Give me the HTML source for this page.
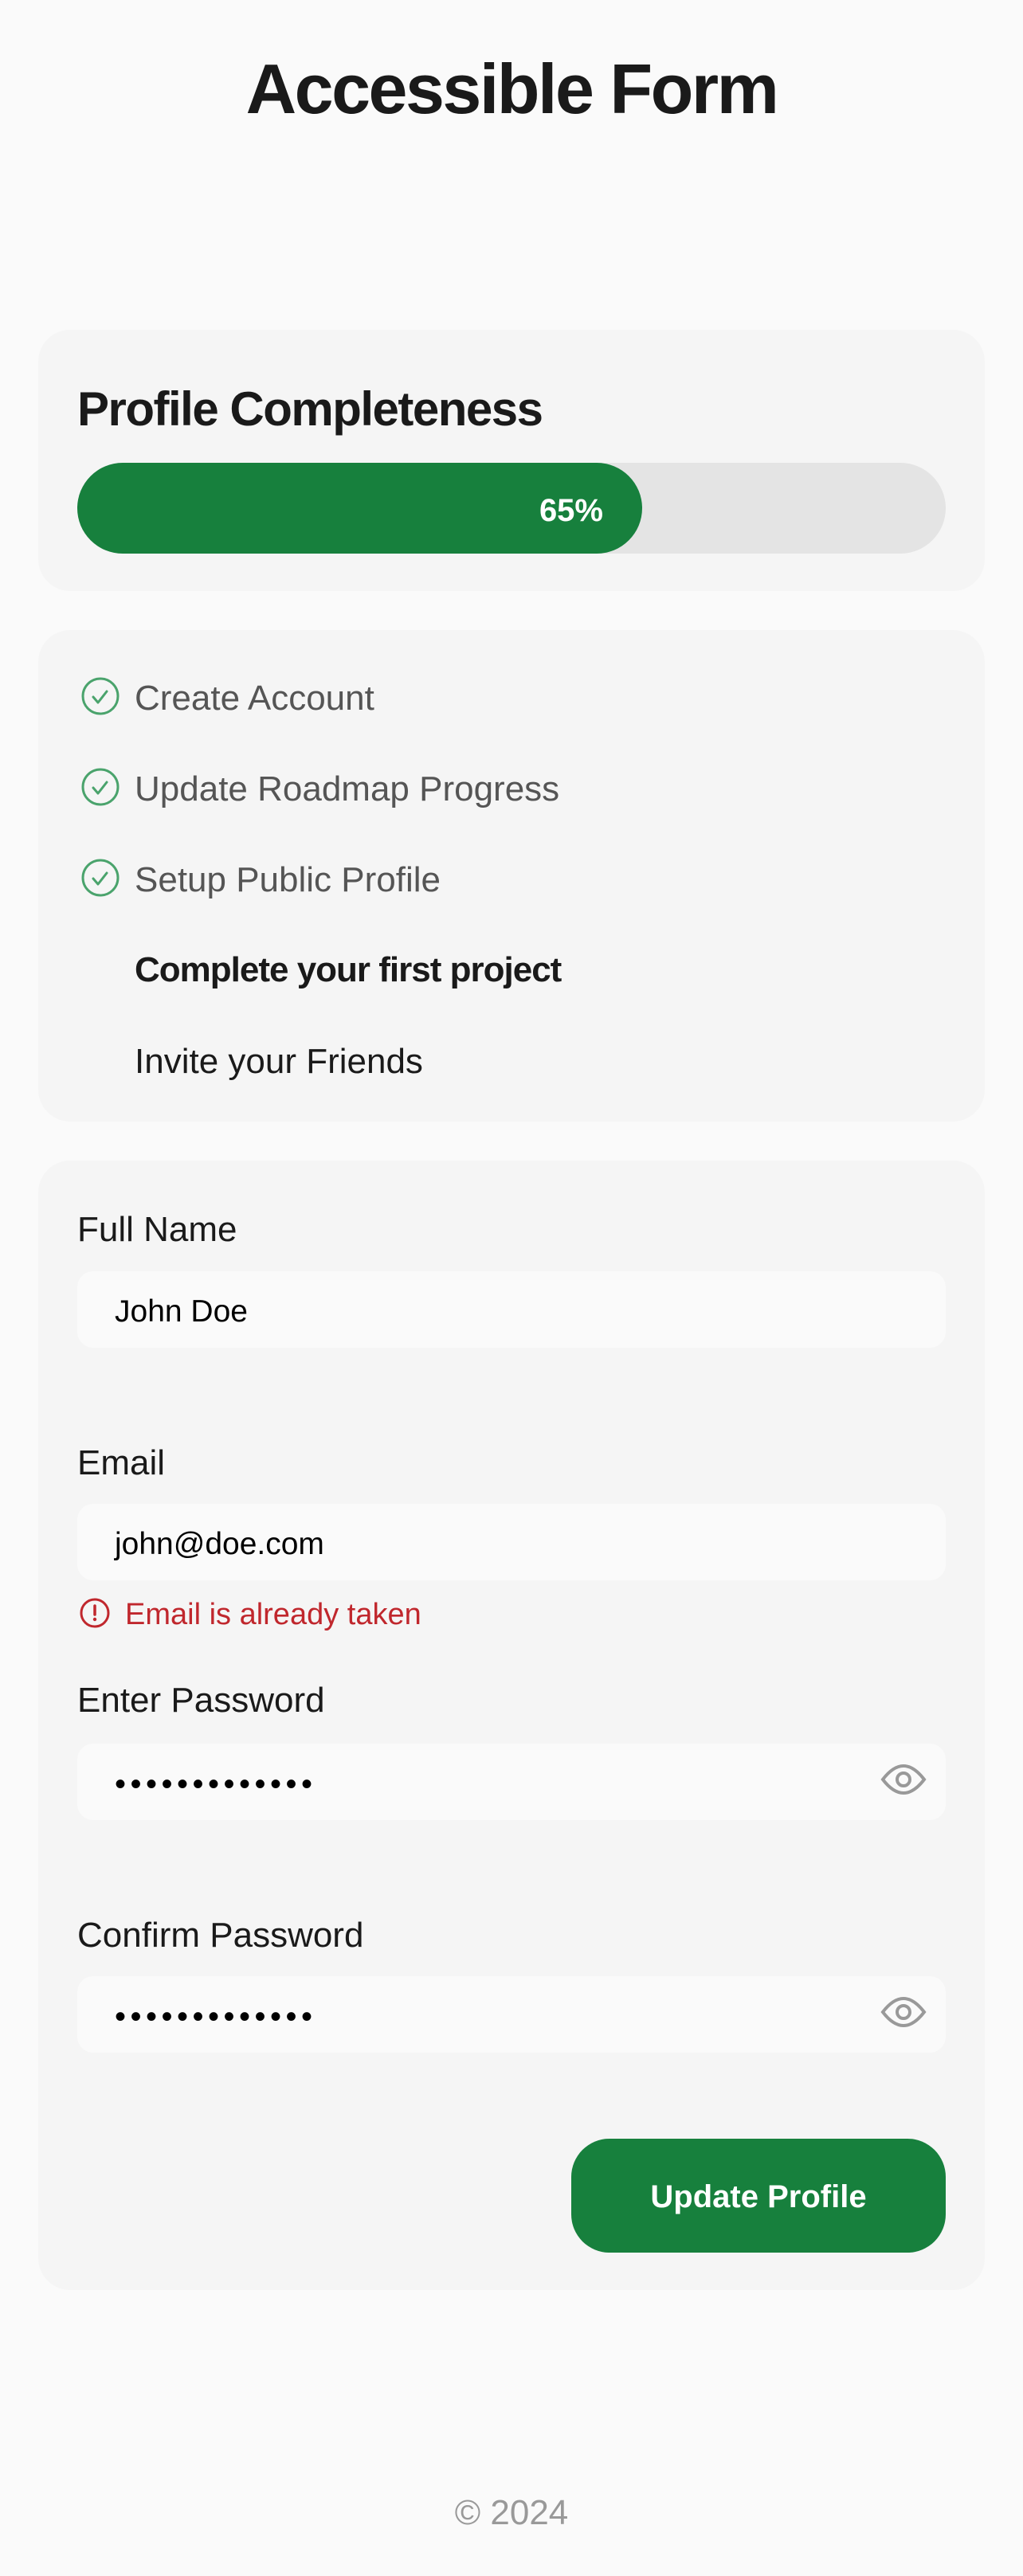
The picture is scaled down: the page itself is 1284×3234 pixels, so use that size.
<!DOCTYPE html>
<html><head><meta charset="utf-8"><style>
*{margin:0;padding:0;box-sizing:border-box}
html,body{width:1284px;height:3234px;background:#fafafa;overflow:hidden}
body{position:relative;font-family:"Liberation Sans",sans-serif;color:#1a1a1a}
.a{position:absolute}
.card{position:absolute;left:48px;width:1188px;background:#f5f5f5;border-radius:40px}
.lbl{position:absolute;left:97px;font-size:44px;color:#1a1a1a;line-height:1}
.inp{position:absolute;left:97px;width:1090px;height:96px;background:#fafafa;border-radius:20px}
.inp span{position:absolute;left:47px;top:3px;line-height:96px;font-size:39px;color:#000}
.item{position:absolute;left:169px;font-size:44px;line-height:1;color:#555}
</style></head><body>
<div class="a" style="left:0;width:1284px;top:68px;text-align:center;font-size:88px;font-weight:bold;letter-spacing:-2.5px;line-height:1">Accessible Form</div>

<div class="card" style="top:414px;height:328px"></div>
<div class="a" style="left:97px;top:484px;font-size:60px;font-weight:bold;letter-spacing:-1.5px;line-height:1">Profile Completeness</div>
<div class="a" style="left:97px;top:581px;width:1090px;height:114px;background:#e4e4e4;border-radius:57px"></div>
<div class="a" style="left:97px;top:581px;width:709px;height:114px;background:#17803d;border-radius:57px"></div>
<div class="a" style="left:600px;width:157px;top:584px;line-height:114px;text-align:right;color:#fff;font-weight:bold;font-size:40px">65%</div>

<div class="card" style="top:791px;height:617px"></div>
<svg class="a" style="left:0;top:0" width="1284" height="1400">
<g fill="none" stroke="#4aa36c" stroke-width="3" stroke-linecap="round" stroke-linejoin="round">
<circle cx="126" cy="874" r="22"/><path d="M117 875l6 7 11-14"/>
<circle cx="126" cy="988" r="22"/><path d="M117 989l6 7 11-14"/>
<circle cx="126" cy="1102" r="22"/><path d="M117 1103l6 7 11-14"/>
</g></svg>
<div class="item" style="top:855px">Create Account</div>
<div class="item" style="top:969px">Update Roadmap Progress</div>
<div class="item" style="top:1083px">Setup Public Profile</div>
<div class="item" style="top:1196px;color:#1a1a1a;font-weight:bold;letter-spacing:-1px">Complete your first project</div>
<div class="item" style="top:1311px;color:#1a1a1a">Invite your Friends</div>

<div class="card" style="top:1457px;height:1418px"></div>
<div class="lbl" style="top:1522px">Full Name</div>
<div class="inp" style="top:1596px"><span>John Doe</span></div>
<div class="lbl" style="top:1815px">Email</div>
<div class="inp" style="top:1888px"><span>john@doe.com</span></div>
<svg class="a" style="left:97px;top:2005px" width="44" height="44"><circle cx="22" cy="20" r="17" fill="none" stroke="#c0272d" stroke-width="3"/><path d="M22 11v11" stroke="#c0272d" stroke-width="3.5" stroke-linecap="round"/><circle cx="22" cy="28" r="2.2" fill="#c0272d"/></svg>
<div class="a" style="left:157px;top:2008px;font-size:38px;color:#c0272d;line-height:1">Email is already taken</div>
<div class="lbl" style="top:2113px">Enter Password</div>
<div class="inp" style="top:2189px"><span style="letter-spacing:5.5px;font-size:40px">•••••••••••••</span></div>
<div class="lbl" style="top:2408px">Confirm Password</div>
<div class="inp" style="top:2481px"><span style="letter-spacing:5.5px;font-size:40px">•••••••••••••</span></div>
<svg class="a" style="left:0;top:2150px" width="1284" height="500"><g fill="none" stroke="#999" stroke-width="4">
<path d="M1108 84Q1134 50 1160 84Q1134 118 1108 84Z"/><circle cx="1134" cy="84" r="8"/>
<path d="M1108 376Q1134 342 1160 376Q1134 410 1108 376Z"/><circle cx="1134" cy="376" r="8"/></g></svg>
<div class="a" style="left:717px;top:2685px;width:470px;height:143px;background:#17803d;border-radius:48px;color:#fff;font-weight:bold;font-size:40px;line-height:147px;text-align:center">Update Profile</div>

<div class="a" style="left:0;width:1284px;top:3133px;text-align:center;font-size:44px;color:#999;line-height:1">© 2024</div>
</body></html>
